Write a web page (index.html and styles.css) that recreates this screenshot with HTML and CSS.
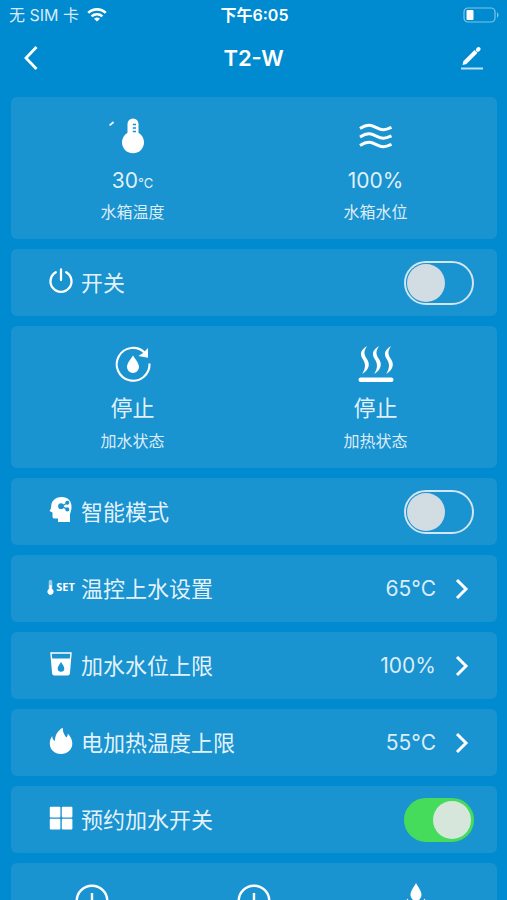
FILE: index.html
```html
<!DOCTYPE html>
<html lang="zh-CN">
<head>
<meta charset="utf-8">
<meta name="viewport" content="width=device-width, initial-scale=1">
<title>T2-W</title>
<link rel="stylesheet" href="styles.css">
</head>
<body>
<div class="status-bar">
  <div class="carrier">
    <span>无 SIM 卡</span>
    <svg width="20" height="14" viewBox="0 0 20 14" fill="none" stroke="#fff" stroke-width="2.6" aria-hidden="true">
      <path d="M1.2 4.9a12.8 12.8 0 0 1 17.6 0"/>
      <path d="M4.6 8.4a7.9 7.9 0 0 1 10.8 0"/>
      <path d="M10 13.6 7 10.8a4.4 4.4 0 0 1 6 0z" fill="#fff" stroke="none"/>
    </svg>
  </div>
  <div class="time">下午6:05</div>
  <svg class="battery" width="37" height="16" viewBox="0 0 37 16" aria-hidden="true">
    <rect x="1" y="1" width="31" height="14" rx="4" fill="none" stroke="#fff" stroke-opacity=".5" stroke-width="1.2"/>
    <rect x="3.5" y="3" width="7" height="10" rx="1" fill="#fff"/>
    <path d="M34 5.5c2 .6 2 4.4 0 5z" fill="#fff" fill-opacity=".5"/>
  </svg>
</div>
<header class="nav">
  <button class="nav-button" type="button" aria-label="返回">
    <svg width="16" height="26" viewBox="0 0 16 26" fill="none" stroke="#fff" stroke-width="2.8"><path d="M13.5 2 3 13l10.5 11"/></svg>
  </button>
  <h1>T2-W</h1>
  <button class="nav-button" type="button" aria-label="编辑">
    <svg width="24" height="24" viewBox="0 0 24 24" fill="none" stroke="#fff">
      <path d="M5 16.5 16 5.500" stroke-width="4"/>
      <path d="M2.6 19 3.4 14.8 6.7 18z" fill="#fff" stroke="none"/>
      <path d="M17.8 3.8 18.6 3" stroke-width="4" stroke-linecap="round"/>
      <path d="M1 22.5h22" stroke-width="2" stroke-opacity=".75"/>
    </svg>
  </button>
</header>
<main class="content">
  <section class="card stats">
    <div class="stat">
      <svg width="48" height="36" viewBox="0 0 48 36" aria-hidden="true">
        <path d="M.6 8.4 4.6 5" stroke="#fff" stroke-width="1.7"/>
        <path d="M18.5 7a5.500 5.500 0 0 1 11 0v8.800a11 11 0 1 1-11 0z" fill="#fff"/>
        <path d="M23.800 7.500h3.200M23.800 11h3.200M23.800 14.500h3.200" stroke="#1a93d1" stroke-width="1.6"/>
      </svg>
      <div class="value">30<small>°C</small></div>
      <div class="caption">水箱温度</div>
    </div>
    <div class="stat">
      <svg width="36" height="36" viewBox="0 0 36 36" fill="none" stroke="#fff" stroke-width="3" aria-hidden="true">
        <path id="wave" d="M2 11.500c3.500-2.200 7-3.800 11-3 4.500.9 8 4.400 12.500 4.200 3.500 0 5.500-1.200 8-2.400"/>
        <use href="#wave" y="8.500"/>
        <use href="#wave" y="17"/>
      </svg>
      <div class="value">100%</div>
      <div class="caption">水箱水位</div>
    </div>
  </section>

  <div class="card row">
    <span class="icon"><svg width="26" height="26" viewBox="0 0 26 26" fill="none" stroke="#fff" stroke-width="2.3" stroke-linecap="round" aria-hidden="true"><path d="M13 1.500V12M7.800 4.200a10.500 10.500 0 1 0 10.400 0"/></svg></span>
    <label class="name" for="power">开关</label>
    <input class="toggle" type="checkbox" role="switch" id="power">
  </div>

  <section class="card stats states">
    <div class="stat">
      <svg width="36" height="36" viewBox="0 0 36 36" aria-hidden="true">
        <path d="M34.500 17.500A16.400 16.400 0 1 1 30 7" fill="none" stroke="#fff" stroke-width="2.1"/>
        <path d="M33 2v9.800l-9.600-1.800 4.600-3z" fill="#fff"/>
        <path d="M18 9.500c2.600 4.200 6 7.600 6 11.500a6 6 0 0 1-12 0c0-3.900 3.400-7.300 6-11.500z" fill="#fff"/>
      </svg>
      <div class="value">停止</div>
      <div class="caption">加水状态</div>
    </div>
    <div class="stat">
      <svg width="36" height="36" viewBox="0 0 36 36" fill="#fff" aria-hidden="true">
        <path id="steam" d="M9 0C1.500 4.500 2 9 5 13.500c3 5 2.500 9-.8 14.500C11.500 23.500 12.200 18 9 13 5.800 8.500 5.500 5.500 9 0z"/>
        <use href="#steam" x="12"/>
        <use href="#steam" x="24"/>
        <rect x=".5" y="31.500" width="35" height="4.500" rx="2.200"/>
      </svg>
      <div class="value">停止</div>
      <div class="caption">加热状态</div>
    </div>
  </section>

  <div class="card row">
    <span class="icon"><svg width="26" height="28" viewBox="0 0 26 28" aria-hidden="true">
      <path d="M3.200 9.500C3.800 4 8.300 1 13.800 1c6 0 9.700 4 9.700 9.500 0 3.500-.6 5-1.500 7.500V26H10v-3.500H6.200c-1.200 0-1.700-.8-1.700-2v-4L1.500 15c1.400-1.500 1.700-3.500 1.700-5.500z" fill="#fff"/>
      <g fill="#1a93d1" stroke="#1a93d1" stroke-width="1.3"><path d="m13.500 10.200 6-3.400M13.500 10.200l6 3.200" fill="none"/><circle cx="13" cy="10.200" r="2.200"/><circle cx="19.300" cy="6.800" r="1.400"/><circle cx="19.300" cy="13.400" r="1.400"/></g>
    </svg></span>
    <label class="name" for="smart">智能模式</label>
    <input class="toggle" type="checkbox" role="switch" id="smart">
  </div>

  <button class="card row" type="button">
    <span class="icon set-icon"><svg width="7" height="16" viewBox="0 0 7 16" aria-hidden="true"><path d="M1.700 2.500a1.800 1.800 0 0 1 3.600 0v7.300a3.100 3.100 0 1 1-3.600 0z" fill="#fff" fill-opacity=".55"/><path d="M2.400 6h2.200v4a3 3 0 1 1-2.200 0z" fill="#fff"/></svg>SET</span>
    <span class="name">温控上水设置</span>
    <span class="setting">65°C</span>
    <svg class="chevron" width="14" height="22" viewBox="0 0 14 22" aria-hidden="true"><path d="m2 2 9 9-9 9"/></svg>
  </button>

  <button class="card row" type="button">
    <span class="icon"><svg width="24" height="26" viewBox="0 0 24 26" aria-hidden="true">
      <path d="M2 2h20l-1.800 20.500a1.500 1.500 0 0 1-1.500 1.300H5.300a1.500 1.500 0 0 1-1.500-1.300z" fill="none" stroke="#fff" stroke-width="1.4"/>
      <path d="M2.500 7.500h19l-1.400 15a1.500 1.500 0 0 1-1.500 1.300H5.400a1.500 1.500 0 0 1-1.500-1.300z" fill="#fff"/>
      <path d="M12 11c1.500 2.600 3.300 4.400 3.300 6.500a3.300 3.300 0 0 1-6.600 0C8.700 15.400 10.500 13.600 12 11z" fill="#1a93d1"/>
    </svg></span>
    <span class="name">加水水位上限</span>
    <span class="setting">100%</span>
    <svg class="chevron" width="14" height="22" viewBox="0 0 14 22" aria-hidden="true"><path d="m2 2 9 9-9 9"/></svg>
  </button>

  <button class="card row" type="button">
    <span class="icon"><svg width="24" height="28" viewBox="0 0 24 28" fill="#fff" aria-hidden="true"><path d="M13.800.8c-.2 4 1 6.200 3.400 9.700 1.200-1 1.700-2.400 1.500-4 2.900 2.600 4.600 6.500 4.600 10.100C23.300 22.800 18.500 27 12 27S.8 22.600.8 16.500c0-3 .9-5.400 2.400-7.500.1 2.200.8 4 2.700 5C6 8.500 8.500 3.500 13.800.8z"/></svg></span>
    <span class="name">电加热温度上限</span>
    <span class="setting">55°C</span>
    <svg class="chevron" width="14" height="22" viewBox="0 0 14 22" aria-hidden="true"><path d="m2 2 9 9-9 9"/></svg>
  </button>

  <div class="card row">
    <span class="icon"><svg width="24" height="24" viewBox="0 0 24 24" fill="#fff" aria-hidden="true"><rect x=".8" y=".8" width="10.600" height="10.600" rx="1"/><rect x="12.800" y=".8" width="10.600" height="10.600" rx="1"/><rect x=".8" y="12.800" width="10.600" height="10.600" rx="1"/><rect x="12.800" y="12.800" width="10.600" height="10.600" rx="1"/></svg></span>
    <label class="name" for="schedule">预约加水开关</label>
    <input class="toggle" type="checkbox" role="switch" id="schedule" checked>
  </div>

  <section class="card stats">
    <div class="stat"><svg width="36" height="36" viewBox="0 0 36 36" fill="none" stroke="#fff" stroke-width="2.4" aria-hidden="true"><circle cx="18" cy="18" r="15.300"/><path d="M18 10v10h8"/></svg></div>
    <div class="stat"><svg width="36" height="36" viewBox="0 0 36 36" fill="none" stroke="#fff" stroke-width="2.4" aria-hidden="true"><circle cx="18" cy="18" r="15.300"/><path d="M18 10v10h8"/></svg></div>
    <div class="stat"><svg width="36" height="36" viewBox="0 0 36 36" fill="#fff" aria-hidden="true"><path d="M18 0c2.500 4.500 5.500 8 5.500 12a5.500 5.500 0 0 1-11 0c0-4 3-7.500 5.500-12z"/><path d="M9.500 15.500c1.500 2.700 2.600 4 2.600 5.800a2.600 2.600 0 0 1-5.200 0c0-1.800 1.100-3.100 2.600-5.800zM26.500 15.500c1.500 2.700 2.600 4 2.600 5.800a2.600 2.600 0 0 1-5.200 0c0-1.800 1.100-3.100 2.600-5.800z"/></svg></div>
  </section>
</main>
</body>
</html>
```
FILE: styles.css
```css
* {
  box-sizing: border-box;
}

body {
  margin: 0;
  height: 100vh;
  display: flex;
  flex-direction: column;
  background: #008ad0;
  color: #fff;
  font-family: Inter, "Noto Sans CJK SC", sans-serif;
}

svg {
  display: block;
  flex: none;
  overflow: visible;
}

button {
  border: 0;
  color: inherit;
  font: inherit;
  cursor: pointer;
}

.status-bar {
  flex: none;
  display: grid;
  grid-template-columns: 1fr auto 1fr;
  align-items: center;
  height: 30px;
  padding: 0 7px 0 9px;
  font-size: 16px;
  line-height: 24px;
}

.carrier {
  display: flex;
  align-items: center;
  gap: 8px;
  color: rgba(255, 255, 255, 0.85);
}

.time {
  font-weight: 600;
}

.battery {
  justify-self: end;
}

.nav {
  flex: none;
  display: grid;
  grid-template-columns: 1fr auto 1fr;
  align-items: center;
  height: 56px;
  padding: 0 11px;
}

.nav h1 {
  margin: 0;
  font-size: 22px;
  font-weight: 600;
  line-height: 28px;
}

.nav-button {
  display: grid;
  place-items: center;
  width: 40px;
  height: 40px;
  padding: 0;
  background: none;
}

.nav-button:last-child {
  justify-self: end;
  margin-right: 4px;
}

.content {
  flex: 1;
  min-height: 0;
  display: flex;
  flex-direction: column;
  gap: 10px;
  padding: 11px 10px 11px 11px;
  overflow-y: auto;
  scrollbar-width: none;
}

.card {
  flex: none;
  border-radius: 6px;
  background: #1a93d1;
}

.stats {
  display: flex;
  padding: 20px 0 15px;
}

.stat {
  flex: 1;
  display: flex;
  flex-direction: column;
  align-items: center;
}

.value {
  margin-top: 14px;
  font-size: 21px;
  line-height: 28px;
  color: rgba(255, 255, 255, 0.88);
}

.value small {
  font-size: 13px;
  line-height: 1;
}

.caption {
  margin-top: 5px;
  font-size: 16px;
  line-height: 24px;
  color: rgba(255, 255, 255, 0.85);
}

.states .value {
  margin-top: 10px;
  font-size: 22px;
  line-height: 32px;
}

.row {
  display: flex;
  align-items: center;
  min-height: 67px;
  padding: 0 23px 0 34px;
  text-align: left;
}

.icon {
  flex: none;
  display: flex;
  align-items: center;
  justify-content: center;
  width: 32px;
  margin-right: 4px;
  padding-bottom: 4px;
}

.set-icon {
  gap: 2px;
  font-family: "Open Sans", sans-serif;
  font-size: 11px;
  font-weight: 700;
  line-height: 16px;
}

.name {
  flex: 1;
  font-size: 22px;
  line-height: 32px;
  color: rgba(255, 255, 255, 0.9);
}

.setting {
  font-size: 21px;
  line-height: 32px;
  color: rgba(255, 255, 255, 0.85);
}

.chevron {
  margin: 0 5px 0 19px;
  fill: none;
  stroke: #fff;
  stroke-width: 3;
}

.toggle {
  appearance: none;
  flex: none;
  width: 70px;
  height: 44px;
  margin: 0;
  padding: 1px;
  border: 2px solid #d3e5ef;
  border-radius: 22px;
  cursor: pointer;
}

.toggle::before {
  content: "";
  display: block;
  width: 38px;
  height: 38px;
  border-radius: 50%;
  background: #d1dce3;
}

.toggle:checked {
  border-color: #45dc5c;
  background: #45dc5c;
}

.toggle:checked::before {
  margin-left: auto;
  background: #d6e6da;
}
```
